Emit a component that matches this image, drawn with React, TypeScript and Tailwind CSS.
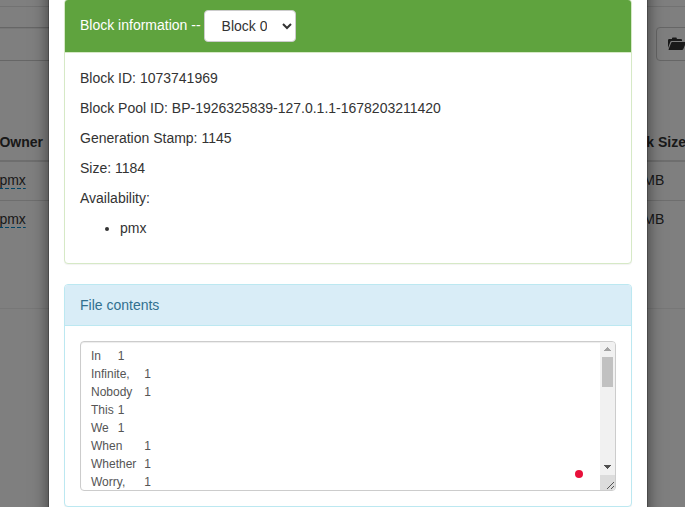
const owners = ["pmx", "pmx"];
const words: [string, number][] = [
  ["In", 1],
  ["Infinite,", 1],
  ["Nobody", 1],
  ["This", 1],
  ["We", 1],
  ["When", 1],
  ["Whether", 1],
  ["Worry,", 1],
];

function FolderOpenIcon() {
  return (
    <svg className="h-[14px] w-[20px] shrink-0 text-[#333]" viewBox="0 0 20 14" fill="currentColor">
      <path d="M0 11V3.2Q0 2 1.2 2H4V1.2Q4 0.5 4.8 0.5H8Q8.8 0.5 8.8 1.2V2H13Q14 2 14 3V4H3.6Q2.8 4 2.4 4.8z" />
      <path d="M4.2 5H17.2Q18.2 5 17.8 6L15.2 12.2Q14.9 13 14 13H1Q0.3 13 0.6 12.2L3.2 5.8Q3.5 5 4.2 5z" />
    </svg>
  );
}

function Explorer() {
  return (
    <div className="h-full w-[720px] bg-white pt-[6px]">
      <div className="h-px bg-[#e5e5e5]" />
      <div className="mt-5 flex h-[34px] gap-[15px]">
        <div className="-ml-2 w-[649px] rounded-[4px] border border-[#ccc] shadow-[inset_0_1px_1px_rgba(0,0,0,0.075)]" />
        <div className="flex h-[34px] w-[42px] items-center rounded-[4px] border border-[#ccc] pl-[11px]">
          <FolderOpenIcon />
        </div>
      </div>
      <div className="mt-[62px] flex h-[39px] justify-between border-b-2 border-[#ddd] pt-[9px] font-bold leading-5">
        <span className="-ml-[0.6px]">Owner</span>
        <span className="w-[104px] whitespace-nowrap">Block Size</span>
      </div>
      {owners.map((owner, i) => (
        <div
          key={i}
          className={`flex h-[39px] justify-between pt-[8px] leading-5 ${i === 0 ? "border-b border-[#ddd]" : ""}`}
        >
          <span className="-ml-[0.6px] h-[19px] bg-[repeating-linear-gradient(to_right,#0088cc_0_4px,transparent_4px_6px)] bg-[length:100%_1px] bg-bottom bg-no-repeat leading-5">
            {owner}
          </span>
          <span className="w-[104px]">128 MB</span>
        </div>
      ))}
      <div className="mt-[68px] h-px bg-[#eee]" />
    </div>
  );
}

function BlockPanel() {
  return (
    <section className="-mt-px rounded-[4px] border border-[#d6e9c6] bg-white shadow-[0_1px_1px_rgba(0,0,0,0.05)]">
      <header className="flex h-[53px] items-center rounded-t-[3px] border-b border-[#d6e9c6] bg-[#5fa33e] px-[15px] text-white">
        <span className="mr-[3px] whitespace-nowrap pb-[2px]">Block information --</span>
        <select className="h-[32px] w-[92px] rounded-[4px] border border-[#ccc] bg-white py-0 pl-[13px] pr-3 text-[14px] text-[#333]">
          <option>Block 0</option>
        </select>
      </header>
      <div className="flex flex-col gap-[10px] px-[15px] pb-[25px] pt-[15px] leading-5">
        <p>Block ID: 1073741969</p>
        <p>Block Pool ID: BP-1926325839-127.0.1.1-1678203211420</p>
        <p>Generation Stamp: 1145</p>
        <p>Size: 1184</p>
        <p>Availability:</p>
        <ul className="list-disc pl-10">
          <li>pmx</li>
        </ul>
      </div>
    </section>
  );
}

function Scrollbar() {
  return (
    <div className="flex w-[15px] shrink-0 flex-col bg-[#f1f1f1]">
      <svg className="h-[15px] w-[15px] shrink-0" viewBox="0 0 15 15" shapeRendering="crispEdges">
        <path d="M7 5h1v1h1v1h1v1h1v1H4V8h1V7h1V6h1z" fill="#a3a3a3" />
      </svg>
      <div className="mx-[2px] h-[30px] bg-[#c1c1c1]" />
      <svg className="mt-auto h-[15px] w-[15px] shrink-0" viewBox="0 0 15 15" shapeRendering="crispEdges">
        <path d="M4 5h7v1h-1v1H9v1H8v1H7V8H6V7H5V6H4z" fill="#505050" />
      </svg>
      <svg className="h-[15px] w-[15px] shrink-0 bg-[#dcdcdc]" viewBox="0 0 15 15">
        <path d="M7 14l7-7M11 14l3-3" stroke="#555" strokeWidth="1" fill="none" />
      </svg>
    </div>
  );
}

function ContentsPanel() {
  return (
    <section className="rounded-[4px] border border-[#bce8f1] bg-white shadow-[0_1px_1px_rgba(0,0,0,0.05)]">
      <header className="h-[41px] rounded-t-[3px] border-b border-[#bce8f1] bg-[#d9edf7] px-[15px] py-[10px] leading-5 text-[#31708f]">
        File contents
      </header>
      <div className="p-[15px]">
        <div className="relative flex h-[150px] overflow-hidden rounded-[4px] border border-[#ccc] shadow-[inset_0_1px_1px_rgba(0,0,0,0.075)]">
          <pre className="grow overflow-hidden pl-[10px] pt-[5px] font-['Liberation_Sans',Arial,sans-serif] text-[12px] leading-[18px] text-[#555] [tab-size:8]">
            {words.map(([word, count]) => `${word}\t${count}`).join("\n")}
          </pre>
          <Scrollbar />
          <span className="absolute left-[494px] top-[128px] h-2 w-2 rounded-full bg-[#e8103a]" />
        </div>
      </div>
    </section>
  );
}

export default function App() {
  return (
    <div className="relative h-[507px] w-full overflow-hidden font-['Liberation_Sans',Arial,sans-serif] text-[14px] text-[#333]">
      <Explorer />
      <div className="absolute inset-0 overflow-hidden bg-black/50">
        <div className="-mt-[30px] ml-[48px] h-[620px] w-[600px] border border-black/20 bg-white bg-clip-padding px-[15px] pt-[29px] shadow-[0_5px_15px_rgba(0,0,0,0.5)]">
          <div className="flex flex-col gap-5">
            <BlockPanel />
            <ContentsPanel />
          </div>
        </div>
      </div>
    </div>
  );
}
